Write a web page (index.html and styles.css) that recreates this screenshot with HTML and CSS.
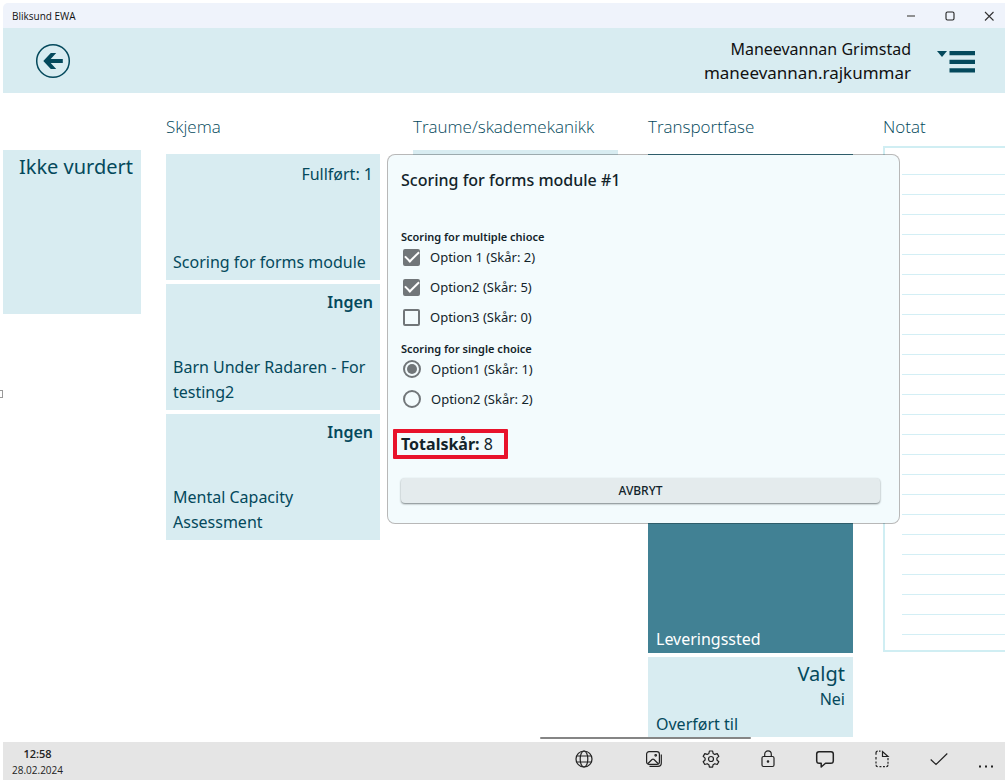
FILE: index.html
```html
<!DOCTYPE html>
<html lang="no">
<head>
<meta charset="utf-8">
<title>Bliksund EWA</title>
<link rel="stylesheet" href="styles.css">
</head>
<body>
<div class="window">
  <div class="titlebar">
    <span class="titlebar-name">Bliksund EWA</span>
    <div class="titlebar-controls">
      <button type="button" aria-label="Minimer"><svg width="12" height="12" viewBox="0 0 12 12"><path d="M2 6h8" stroke="#777" stroke-width="1.6"/></svg></button>
      <button type="button" aria-label="Maksimer"><svg width="12" height="12" viewBox="0 0 12 12"><rect x="2" y="2" width="8" height="8" rx="1.5" fill="none" stroke="#222" stroke-width="1.1"/></svg></button>
      <button type="button" aria-label="Lukk"><svg width="12" height="12" viewBox="0 0 12 12"><path d="M2 2l8.500 8.500M10.500 2L2 10.500" stroke="#333" stroke-width="1.100"/></svg></button>
    </div>
  </div>

  <header class="header">
    <button type="button" class="back" aria-label="Tilbake">
      <svg width="36" height="36" viewBox="0 0 36 36"><circle cx="18" cy="18" r="16.300" fill="none" stroke="#04495c" stroke-width="1.500"/><path d="M8.300 18L15.800 10H21.200L15.700 15.900H27.800V20.100H15.700L21.200 26H15.800Z" fill="#04495c"/></svg>
    </button>
    <div class="user">
      <span>Maneevannan Grimstad</span>
      <span class="user-login">maneevannan.rajkummar</span>
    </div>
    <button type="button" class="menu" aria-label="Meny">
      <svg width="40" height="24" viewBox="0 0 40 24"><path d="M1 2h10l-5 6z" fill="#04495c"/><path d="M13.500 2H39v4.200H13.500zM13.500 10.800H39V15H13.500zM13.500 19.300H39v4.200H13.500z" fill="#04495c"/></svg>
    </button>
  </header>

  <main class="board">
    <section class="column column-status">
      <h2 class="heading"></h2>
      <div class="tile tile-status"><span class="state state-large">Ikke vurdert</span></div>
    </section>
    <section class="column column-forms">
      <h2 class="heading">Skjema</h2>
      <div class="stack">
        <div class="tile"><span class="state">Fullført: 1</span><span class="name">Scoring for forms module</span></div>
        <div class="tile"><span class="state state-strong">Ingen</span><span class="name">Barn Under Radaren - For testing2</span></div>
        <div class="tile"><span class="state state-strong">Ingen</span><span class="name">Mental Capacity Assessment</span></div>
      </div>
    </section>
    <section class="column">
      <h2 class="heading">Traume/skademekanikk</h2>
      <div class="tile tile-trauma"></div>
    </section>
    <section class="column">
      <h2 class="heading">Transportfase</h2>
      <div class="stack stack-fill">
        <div class="tile tile-delivery"><span class="name">Leveringssted</span></div>
        <div class="tile tile-transfer"><span class="state state-large">Valgt</span><span class="state state-sub">Nei</span><span class="name">Overført til</span></div>
      </div>
    </section>
    <section class="column column-note">
      <h2 class="heading">Notat</h2>
      <div class="note"><div class="note-lines"></div></div>
    </section>

    <div class="scrollbar"></div>

    <form class="dialog" role="dialog" aria-labelledby="dialog-title">
      <h1 id="dialog-title" class="dialog-title">Scoring for forms module #1</h1>
      <fieldset class="group">
        <legend>Scoring for multiple chioce</legend>
        <div class="options">
          <label class="option"><input type="checkbox" checked><span>Option 1 (Skår: 2)</span></label>
          <label class="option"><input type="checkbox" checked><span>Option2 (Skår: 5)</span></label>
          <label class="option"><input type="checkbox"><span>Option3 (Skår: 0)</span></label>
        </div>
      </fieldset>
      <fieldset class="group">
        <legend>Scoring for single choice</legend>
        <div class="options">
          <label class="option"><input type="radio" name="single" checked><span>Option1 (Skår: 1)</span></label>
          <label class="option"><input type="radio" name="single"><span>Option2 (Skår: 2)</span></label>
        </div>
      </fieldset>
      <p class="total"><strong>Totalskår:</strong> 8</p>
      <button type="button" class="cancel">AVBRYT</button>
    </form>
  </main>

  <footer class="footer">
    <div class="clock"><strong>12:58</strong><span>28.02.2024</span></div>
    <nav class="tools">
      <button type="button" class="tool tool-wide" aria-label="Språk"><svg width="20" height="20" viewBox="0 0 20 20"><circle cx="10" cy="10" r="8"/><ellipse cx="10" cy="10" rx="3.800" ry="8"/><path d="M2.800 7h14.400M2.800 13h14.400"/></svg></button>
      <button type="button" class="tool" aria-label="Bilder"><svg width="20" height="20" viewBox="0 0 20 20"><rect x="2.600" y="2.600" width="12.800" height="12.800" rx="2.500"/><path d="M4 14.500l4-4q1-.8 2 0l4 4M17.300 5.500v8.500q0 3.300-3.300 3.300H5.500"/><circle cx="11.700" cy="6.300" r=".8"/></svg></button>
      <button type="button" class="tool" aria-label="Innstillinger"><svg width="20" height="20" viewBox="0 0 20 20"><path d="M8.400 2h3.200l.5 2.400 1.700 1 2.400-.8 1.600 2.800-1.900 1.700v1.900l1.900 1.700-1.600 2.800-2.400-.8-1.700 1-.5 2.400H8.400l-.5-2.400-1.700-1-2.400.8-1.600-2.800 1.900-1.700V9.100L2.200 7.400l1.600-2.800 2.400.8 1.700-1z" stroke-linejoin="round"/><circle cx="10" cy="10" r="2.500"/></svg></button>
      <button type="button" class="tool" aria-label="Lås"><svg width="20" height="20" viewBox="0 0 20 20"><rect x="4" y="7.500" width="12" height="10" rx="1.500"/><path d="M6.700 7.500V5.200a3.300 3.300 0 0 1 6.600 0v2.300"/><circle cx="10" cy="12.500" r=".7" fill="#222"/></svg></button>
      <button type="button" class="tool" aria-label="Meldinger"><svg width="20" height="20" viewBox="0 0 20 20"><path d="M4 2.700h12q2.300 0 2.300 2.300v7q0 2.300-2.300 2.300h-5.500L6.200 18v-3.700H4Q1.700 14.300 1.700 12V5Q1.700 2.700 4 2.700z" stroke-width="1.500" stroke-linejoin="round"/></svg></button>
      <button type="button" class="tool" aria-label="Dokument"><svg width="20" height="20" viewBox="0 0 20 20"><path d="M10.500 2.500v5h5.500zM8.500 2.200H7M4 5.800V4.200q0-2 1.700-2M4 8v2.500M4 12.500v2M4 15.800q0 1.900 1.700 1.900M7.500 17.700h1.900M11 17.700h1.900M14.300 17.700q1.700 0 1.700-1.900M16 9v2.200M16 12.800v1.900"/></svg></button>
      <button type="button" class="tool" aria-label="Godkjenn"><svg width="20" height="20" viewBox="0 0 20 20"><path d="M1.700 10.500l5.300 5L18.300 4.500"/></svg></button>
      <button type="button" class="tool tool-more" aria-label="Mer"><svg width="20" height="20" viewBox="0 0 20 20"><path d="M3 17.500h2M9 17.500h2M15 17.500h2" stroke-width="2"/></svg></button>
    </nav>
  </footer>
</div>
</body>
</html>
```
FILE: styles.css
```css
* {
  box-sizing: border-box;
}

body {
  margin: 0;
  background: #fff;
  color: #04495c;
  font-family: "Noto Sans", "Open Sans", sans-serif;
  font-size: 16px;
}

button {
  padding: 0;
  border: 0;
  background: none;
  font: inherit;
  color: inherit;
}

svg {
  display: block;
}

.window {
  position: relative;
  display: flex;
  flex-direction: column;
  min-height: 100vh;
  padding: 3px 1px 0 3px;
}

/* Handle at the left window edge */
.window::before {
  position: absolute;
  top: 50%;
  left: 0;
  width: 2px;
  height: 6px;
  border: 1px solid #999;
  border-left: 0;
  content: "";
}

.titlebar {
  display: flex;
  justify-content: space-between;
  align-items: center;
  height: 25px;
  padding-left: 9px;
  border-top-left-radius: 5px;
  background: #eff3fb;
}

.titlebar-name {
  color: #111;
  font-family: "Open Sans", sans-serif;
  font-size: 10px;
}

.titlebar-controls {
  display: flex;
  gap: 27px;
  padding-right: 10px;
}

.header {
  display: flex;
  align-items: center;
  height: 65px;
  padding: 0 29px 0 32px;
  background: #d8ecf1;
}

.user {
  display: flex;
  flex-direction: column;
  align-items: flex-end;
  margin-left: auto;
  margin-right: 25px;
  color: #111;
  line-height: 24px;
}

.user-login {
  font-size: 17px;
}

.board {
  position: relative;
  display: grid;
  grid-template-columns: 163px 247px 235px 235px 1fr;
  flex: 1;
  padding-bottom: 5px;
  overflow: hidden;
}

.column {
  display: flex;
  flex-direction: column;
  padding-right: 30px;
}

.column-status {
  padding-right: 25px;
}

.column-forms {
  padding-right: 33px;
}

.column-note {
  padding-right: 0;
}

.heading {
  height: 53px;
  margin: 0;
  padding-top: 22px;
  font-family: "Open Sans", sans-serif;
  font-size: 17px;
  font-weight: 300;
  line-height: 24px;
  white-space: nowrap;
}

.stack {
  display: flex;
  flex-direction: column;
  gap: 4px;
  padding-top: 8px;
}

.stack-fill {
  flex: 1;
}

.tile {
  display: flex;
  flex-direction: column;
  min-height: 126px;
  padding: 8px 7px 5px;
  background: #d8ecf1;
  line-height: 25px;
}

.name {
  margin-top: auto;
}

.state {
  align-self: flex-end;
}

.state-strong {
  font-weight: 600;
  line-height: 21px;
}

.state-large {
  font-size: 20px;
}

.tile-status {
  min-height: 164px;
  margin-top: 4px;
  padding: 4px 8px;
}

.tile-trauma {
  margin-top: 4px;
}

.tile-delivery {
  flex: 1;
  padding: 0 8px 1px;
  background: #418194;
  color: #fff;
}

.tile-transfer {
  min-height: 80px;
  padding: 4px 8px 1px;
}

.state-sub {
  line-height: 26px;
}

.tile-transfer .name {
  line-height: 24px;
}

.note {
  height: 506px;
  padding: 26px 0 12px 17px;
  border: 2px solid #d0eef3;
  border-right: 0;
}

.note-lines {
  height: 100%;
  background: repeating-linear-gradient(#d3eff5 0 1px, transparent 1px 20px);
}

.scrollbar {
  position: absolute;
  bottom: 3px;
  left: 537px;
  width: 211px;
  height: 2px;
  border-radius: 1px;
  background: #858585;
}

.dialog {
  position: absolute;
  top: 61px;
  left: 384px;
  display: flex;
  flex-direction: column;
  width: 513px;
  padding: 12px 19px 20px 13px;
  border: 1px solid rgba(0, 0, 0, 0.28);
  border-radius: 8px;
  background: #f3fbfd;
  background-clip: padding-box;
  color: #12232a;
}

.dialog-title {
  margin: 0 0 36px;
  font-size: 16px;
  font-weight: 500;
  line-height: 26px;
}

.group {
  margin: 0 0 12px;
  padding: 0;
  border: 0;
  font-size: 13px;
}

.group legend {
  padding: 0;
  font-size: 11px;
  font-weight: 600;
  line-height: 16px;
}

.options {
  display: flex;
  flex-direction: column;
  gap: 6px;
}

.option {
  display: flex;
  align-items: center;
  gap: 10px;
  height: 24px;
  padding-left: 2px;
}

.option input {
  display: grid;
  place-items: center;
  flex: none;
  width: 17px;
  height: 17px;
  margin: 0;
  border: 2px solid #717679;
  appearance: none;
}

.option input[type="checkbox"] {
  border-radius: 2px;
}

.option input[type="checkbox"]:checked {
  background: #717679;
}

.option input[type="checkbox"]:checked::before {
  width: 12px;
  height: 6px;
  border: solid #fff;
  border-width: 0 0 2px 2px;
  content: "";
  transform: translateY(-2px) rotate(-45deg);
}

.option input[type="radio"] {
  width: 18px;
  height: 18px;
  border-radius: 50%;
}

.option input[type="radio"]:checked::before {
  width: 10px;
  height: 10px;
  border-radius: 50%;
  background: #717679;
  content: "";
}

.total {
  align-self: flex-start;
  margin: 6px 0 19px -8px;
  padding: 0 11px 0 4px;
  border: 4px solid #e8122b;
  border-radius: 1px;
  line-height: 22px;
}

.cancel {
  height: 25px;
  border-radius: 4px;
  background: #e4ebed;
  box-shadow: 0 1px 2px #7a8385;
  font-size: 12px;
  font-weight: 500;
}

.footer {
  display: flex;
  justify-content: space-between;
  height: 38px;
  padding-left: 9px;
  background: #e5e5e5;
}

.clock {
  display: flex;
  flex-direction: column;
  align-items: center;
  padding-top: 4px;
  color: #222;
  font-family: "Open Sans", sans-serif;
  font-size: 10px;
  line-height: 16px;
}

.clock strong {
  font-size: 11px;
  font-weight: 600;
}

.tools {
  display: flex;
}

.tool {
  display: flex;
  justify-content: center;
  width: 57px;
  padding-top: 7px;
}

.tool svg {
  fill: none;
  stroke: #222;
  stroke-width: 1.2;
}

.tool-wide {
  margin-right: 13px;
}

.tool-more {
  width: 38px;
}
```
